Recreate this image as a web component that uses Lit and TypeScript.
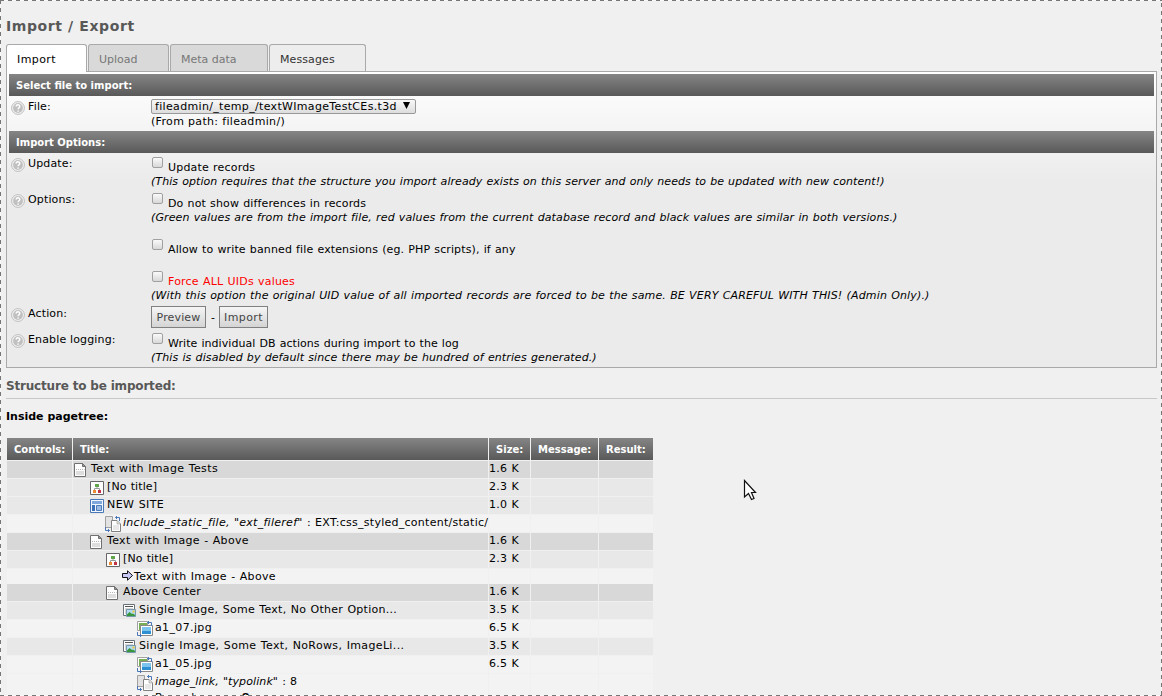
import { LitElement, html, css, svg, nothing, type TemplateResult } from "lit";
import { customElement } from "lit/decorators.js";

const help = html`<svg class="help" width="14" height="14" viewBox="0 0 14 14">
  <circle cx="7" cy="7" r="6.4" fill="#f4f4f4" stroke="#bdbdbd"></circle>
  <circle cx="7" cy="7" r="4.9" fill="#c0c0c0"></circle>
  <path d="M5.2 5.6C5.2 3.2 8.9 3.3 8.8 5.5C8.7 6.8 7.1 6.7 7.1 8.2M7.1 9.4V10.7" fill="none" stroke="#fff" stroke-width="1.5"></path>
</svg>`;

const arrows = svg`<path d="M10.5 1.5H14.5V5M12 0L10.5 1.5L12 3M.5 11V14.5H4.500M3 13L4.5 14.5L3 16" fill="none" stroke="#4a76b8"></path>`;

const icons: Record<string, TemplateResult> = {
  page: html`<svg width="16" height="16" viewBox="0 0 16 16">
    <path d="M.5 1.5H8.5L11.5 4.5V14.5H.5Z" fill="#fdfdfd" stroke="#707070"></path>
    <path d="M8.5 1.5V4.5H11.5Z" fill="#999" stroke="#707070"></path>
    <path d="M2 9H10V13H2Z" fill="#dedede"></path><path d="M2 7.5H10.5" stroke="#b4b4b4" stroke-dasharray="1 1"></path>
  </svg>`,
  tree: html`<svg width="16" height="16" viewBox="0 0 16 16">
    <path d="M.5 1.5H13.5V14.5H.5Z" fill="#fff" stroke="#666"></path>
    <path d="M7 6V9M4.500 11V8.500H9.500V11" fill="none" stroke="#999"></path>
    <path d="M5 4H9V7H5Z" fill="#62a54c"></path><path d="M3 10H6V13H3Z" fill="#f08a30"></path><path d="M8 10H11V13H8Z" fill="#c33442"></path>
  </svg>`,
  site: html`<svg width="16" height="16" viewBox="0 0 16 16">
    <path d="M.5 1.500H13.500V14.500H.5Z" fill="#f2f7fd" stroke="#4878b8"></path>
    <path d="M2 3H12V6H2Z" fill="#7fa8dc"></path><path d="M2 7H5V13H2Z" fill="#3e70b5"></path>
    <path d="M6.500 7.500H11.500V12.500H6.500Z" fill="#9fbce4" stroke="#4d7cbb"></path>
  </svg>`,
  ref: html`<svg width="18" height="16" viewBox="0 0 18 16">
    <path d="M.5 .5H7.500V11.500H.5Z" fill="#e2e2e2" stroke="#a0a0a0"></path>
    <path d="M6.500 4.500H12L15.500 8V15.500H6.500Z" fill="#fff" stroke="#808080"></path>
    <path d="M12 4.500V8H15.500" fill="#ddd" stroke="#999" stroke-width=".6"></path><path d="M8 9H14V14H8Z" fill="#e8e8e8"></path>${arrows}
  </svg>`,
  file: html`<svg width="18" height="16" viewBox="0 0 18 16">
    <path d="M.5 .5H10.500V9.500H.5Z" fill="#fff" stroke="#a0a0a0"></path><path d="M2 2H10V9H2Z" fill="#7aae55"></path>
    <path d="M3.500 4.500H15.500V14.500H3.500Z" fill="#fff" stroke="#888"></path><path d="M5 6H14V10H5Z" fill="#7cc4ee"></path><path d="M5 10H14V13H5Z" fill="#2e8fd2"></path>${arrows}
  </svg>`,
  image: html`<svg width="16" height="16" viewBox="0 0 16 16">
    <path d="M.5 1.500H11.500V12.500H.5Z" fill="#fff" stroke="#687078"></path>
    <path d="M2 3.500H10" stroke="#555"></path><path d="M2 6H10M2 8H4M2 10H4" stroke="#aaa"></path>
    <path d="M3.500 6.500H12.500V13.500H3.500Z" fill="#b5dbf2" stroke="#7799ae"></path>
    <path d="M4 13V11.500L6.500 9L9 11L10 10.500L12 12V13Z" fill="#38963c"></path><path d="M9.500 7.500H11.500V9.500H9.500Z" fill="#f2c52e"></path>
  </svg>`,
  arrow: html`<svg width="12" height="12" viewBox="0 0 12 12">
    <path d="M.5 3.500H5.500V.8L10.500 5.500L5.500 10.200V7.500H.5Z" fill="#c8c8f4" stroke="#111"></path>
  </svg>`,
};

interface Row { icon: string; depth: number; text: string; em?: string; record?: string; size?: string; tone: string; ls: number }
const rows: Row[] = [
  { icon: "page", depth: 0, text: "Text with Image Tests", size: "1.6 K", tone: "dark", ls: 0.36 },
  { icon: "tree", depth: 1, text: "[No title]", size: "2.3 K", tone: "mid", ls: 0.1 },
  { icon: "site", depth: 1, text: "NEW SITE", size: "1.0 K", tone: "mid", ls: 0.4 },
  { icon: "ref", depth: 2, em: 'include_static_file, "ext_fileref"', text: " : EXT:css_styled_content/static/", tone: "light", ls: 0.27 },
  { icon: "page", depth: 1, text: "Text with Image - Above", size: "1.6 K", tone: "dark", ls: 0.32 },
  { icon: "tree", depth: 2, text: "[No title]", size: "2.3 K", tone: "mid", ls: 0.1 },
  { icon: "arrow", depth: 3, text: "Text with Image - Above", tone: "light short", ls: 0.32 },
  { icon: "page", depth: 2, text: "Above Center", size: "1.6 K", tone: "dark", ls: 0.2 },
  { icon: "image", depth: 3, text: "Single Image, Some Text, No Other Option...", size: "3.5 K", tone: "mid", ls: 0.28 },
  { icon: "file", depth: 4, text: "a1_07.jpg", size: "6.5 K", tone: "light", ls: 0.36 },
  { icon: "image", depth: 3, text: "Single Image, Some Text, NoRows, ImageLi...", size: "3.5 K", tone: "mid", ls: 0.36 },
  { icon: "file", depth: 4, text: "a1_05.jpg", size: "6.5 K", tone: "light", ls: 0.36 },
  { icon: "ref", depth: 4, em: 'image_link, "typolink"', text: " : 8", record: "pages:8", tone: "light last", ls: 0.1 },
];

const headings = ["Controls:", "Title:", "Size:", "Message:", "Result:"];

@customElement("app-root")
export class AppRoot extends LitElement {
  static styles = css`
    :host { display: block; position: relative; box-sizing: border-box; width: 1162px; height: 696px; overflow: hidden; background: #f0f0f0; padding: 0 5px 0 6px; color: #000; font: 11px/14px "DejaVu Sans", Verdana, sans-serif; }
    .edge { position: absolute; inset: 0; pointer-events: none; background:
      repeating-linear-gradient(90deg, #777 0 4px, #f8f8f8 4px 8px) 0 0 / 100% 1px no-repeat,
      repeating-linear-gradient(90deg, #777 0 4px, #f8f8f8 4px 8px) 0 100% / 100% 1px no-repeat,
      repeating-linear-gradient(180deg, #777 0 4px, #f8f8f8 4px 8px) 0 0 / 1px 100% no-repeat,
      repeating-linear-gradient(180deg, #f8f8f8 0 3px, #777 3px 7px, #f8f8f8 7px 8px) 100% 0 / 1px 100% no-repeat; }
    h1 { margin: 0; padding-top: 17px; height: 27px; font-size: 14px; line-height: 18px; letter-spacing: .6px; color: #585858; }
    .tabs { display: flex; gap: 1px; height: 27px; }
    .tab { box-sizing: border-box; border: 1px solid #a9a9a9; border-bottom: 0; border-radius: 3px 3px 0 0; height: 27px; padding-left: 10px; line-height: 30px; background: #d9d9d9; color: #777; }
    .t0 { width: 81px; height: 28px; background: #fff; color: #000; position: relative; letter-spacing: .4px; }
    .t1 { width: 81px; } .t2 { width: 98px; } .t3 { width: 97px; background: #ededed; color: #333; letter-spacing: .1px; }
    .panel { box-sizing: border-box; height: 297px; border: 1px solid #a9a9a9; padding: 2px; background: linear-gradient(#fff, #ebebeb 110px); }
    .bar { height: 22px; padding-left: 7px; line-height: 24px; color: #fff; font-weight: bold; font-size: 10px; background: linear-gradient(#858585, #595959); }
    .row { display: grid; grid-template-columns: 19px 123px 1fr; align-items: start; }
    .help { margin: 5px 0 0 2px; }
    .label { padding-top: 4px; letter-spacing: .15px; }
    .file { height: 35px; } .file .field { padding-top: 3px; letter-spacing: .33px; }
    .select { box-sizing: border-box; width: 265px; height: 15px; border: 1px solid #999; border-radius: 2px; background: linear-gradient(#f8f8f8, #ddd); display: flex; justify-content: space-between; line-height: 14px; padding: 0 5px 0 3px; }
    .tri { width: 7px; height: 7px; margin-top: 2px; background: #000; clip-path: polygon(0 0, 100% 0, 50% 100%); }
    .path { padding-top: 1px; }
    .check { display: flex; gap: 5px; height: 21px; word-spacing: .5px; }
    .check span { padding-top: 8px; }
    .box { box-sizing: border-box; width: 11px; height: 11px; margin: 4px 0 0 1px; border: 1px solid #a0a0a0; border-radius: 2px; background: linear-gradient(#fafafa, #d8d8d8); }
    .note { font-style: italic; height: 15px; line-height: 16px; word-spacing: .5px; white-space: nowrap; }
    .update { height: 36px; } .options { height: 114px; }
    .gap { margin-top: 10px; } .gap2 { margin-top: 11px; }
    .red { color: #f00; }
    .action { height: 26px; } .buttons { display: flex; gap: 5px; padding-top: 3px; line-height: 23px; }
    .btn { box-sizing: border-box; height: 22px; border: 1px solid #808080; line-height: 22px; text-align: center; color: #444; background: linear-gradient(#f5f5f5, #d4d4d4); letter-spacing: .15px; }
    .b1 { width: 55px; } .b2 { width: 49px; margin-left: -1px; letter-spacing: .4px; }
    h2 { margin: 0; box-sizing: border-box; height: 31px; border-bottom: 1px solid #c8c8c8; padding-top: 11px; font-size: 12px; line-height: 14px; letter-spacing: -.18px; color: #585858; }
    h3 { margin: 0; height: 39px; box-sizing: border-box; padding-top: 11px; font-size: 11px; line-height: 14px; }
    .table { width: 646px; margin-left: 1px; line-height: 16px; }
    .tr { display: grid; grid-template-columns: 65px 415px 41px 67px 54px; gap: 1px; height: 17px; margin-bottom: 1px; }
    .head { height: 22px; }
    .head .bar { white-space: nowrap; }
    .dark > div { background: #d8d8d8; } .mid > div { background: #e8e8e8; } .light > div { background: #f3f3f3; }
    .tr.short { height: 14px; } .tr.last { height: 22px; margin-bottom: 0; }
    .tr .title { display: flex; white-space: pre; word-spacing: .5px; }
    .size { letter-spacing: .25px; word-spacing: .5px; }
    .icon { flex: none; width: 18px; height: 17px; padding: 1px 0 0 1px; box-sizing: border-box; }
    .icon svg { display: block; overflow: visible; }
    .image { padding-left: 2px; }
    .wide { margin-left: -1px; margin-right: 1px; }
    .narrow { width: 13px; }
    .short .text { line-height: 15px; }
    .record { line-height: 16px; letter-spacing: .25px; }
    .cursor { position: absolute; left: 743px; top: 479px; }
  `;

  private option(label: string, ls: number, note = "", noteLs = 0, cls = "") {
    return html`<div class="check ${cls}"><i class="box"></i><span style="letter-spacing:${ls}px">${label}</span></div>${note ? html`<div class="note" style="letter-spacing:${noteLs}px">${note}</div>` : nothing}`;
  }

  private row(r: Row) {
    const kind = r.icon === "ref" || r.icon === "file" ? "wide" : r.icon === "arrow" ? "narrow" : r.icon;
    return html`<div class="tr ${r.tone}"><div></div>
      <div class="title" style="padding-left:${r.depth * 16}px"><span class="icon ${kind}">${icons[r.icon]}</span><div class="text" style="letter-spacing:${r.ls}px">${r.em ? html`<em>${r.em}</em>` : nothing}${r.text}${r.record ? html`<div class="record">Record <strong>${r.record}</strong></div>` : nothing}</div></div>
      <div class="size">${r.size ?? ""}</div><div></div><div></div></div>`;
  }

  render() {
    return html`
      <h1>Import / Export</h1>
      <div class="tabs"><div class="tab t0">Import</div><div class="tab t1">Upload</div><div class="tab t2">Meta data</div><div class="tab t3">Messages</div></div>
      <div class="panel">
        <div class="bar">Select file to import:</div>
        <div class="row file">${help}<div class="label">File:</div><div class="field"><div class="select"><span>fileadmin/_temp_/textWImageTestCEs.t3d</span><i class="tri"></i></div><div class="path">(From path: fileadmin/)</div></div></div>
        <div class="bar">Import Options:</div>
        <div class="row update">${help}<div class="label">Update:</div><div>${this.option("Update records", 0.18, "(This option requires that the structure you import already exists on this server and only needs to be updated with new content!)", 0.07)}</div></div>
        <div class="row options">${help}<div class="label">Options:</div><div>
          ${this.option("Do not show differences in records", 0.13, "(Green values are from the import file, red values from the current database record and black values are similar in both versions.)", 0.125)}
          ${this.option("Allow to write banned file extensions (eg. PHP scripts), if any", 0.12, "", 0, "gap")}
          ${this.option("Force ALL UIDs values", 0.2, "(With this option the original UID value of all imported records are forced to be the same. BE VERY CAREFUL WITH THIS! (Admin Only).)", 0.15, "gap2 red")}</div></div>
        <div class="row action">${help}<div class="label">Action:</div><div class="buttons"><div class="btn b1">Preview</div>-<div class="btn b2">Import</div></div></div>
        <div class="row">${help}<div class="label">Enable logging:</div><div>${this.option("Write individual DB actions during import to the log", 0.06, "(This is disabled by default since there may be hundred of entries generated.)", 0.11)}</div></div>
      </div>
      <h2>Structure to be imported:</h2>
      <h3>Inside pagetree:</h3>
      <div class="table">
        <div class="tr head">${headings.map((t) => html`<div class="bar">${t}</div>`)}</div>
        ${rows.map((r) => this.row(r))}
      </div>
      <svg class="cursor" width="16" height="22" viewBox="0 0 16 22"><path d="M1.500 1.500V18L5.500 14.500L8.500 20.500L11 19.500L8.500 13.500H12.500Z" fill="#fff" stroke="#111" stroke-width="1.200"></path></svg>
      <div class="edge"></div>`;
  }
}
